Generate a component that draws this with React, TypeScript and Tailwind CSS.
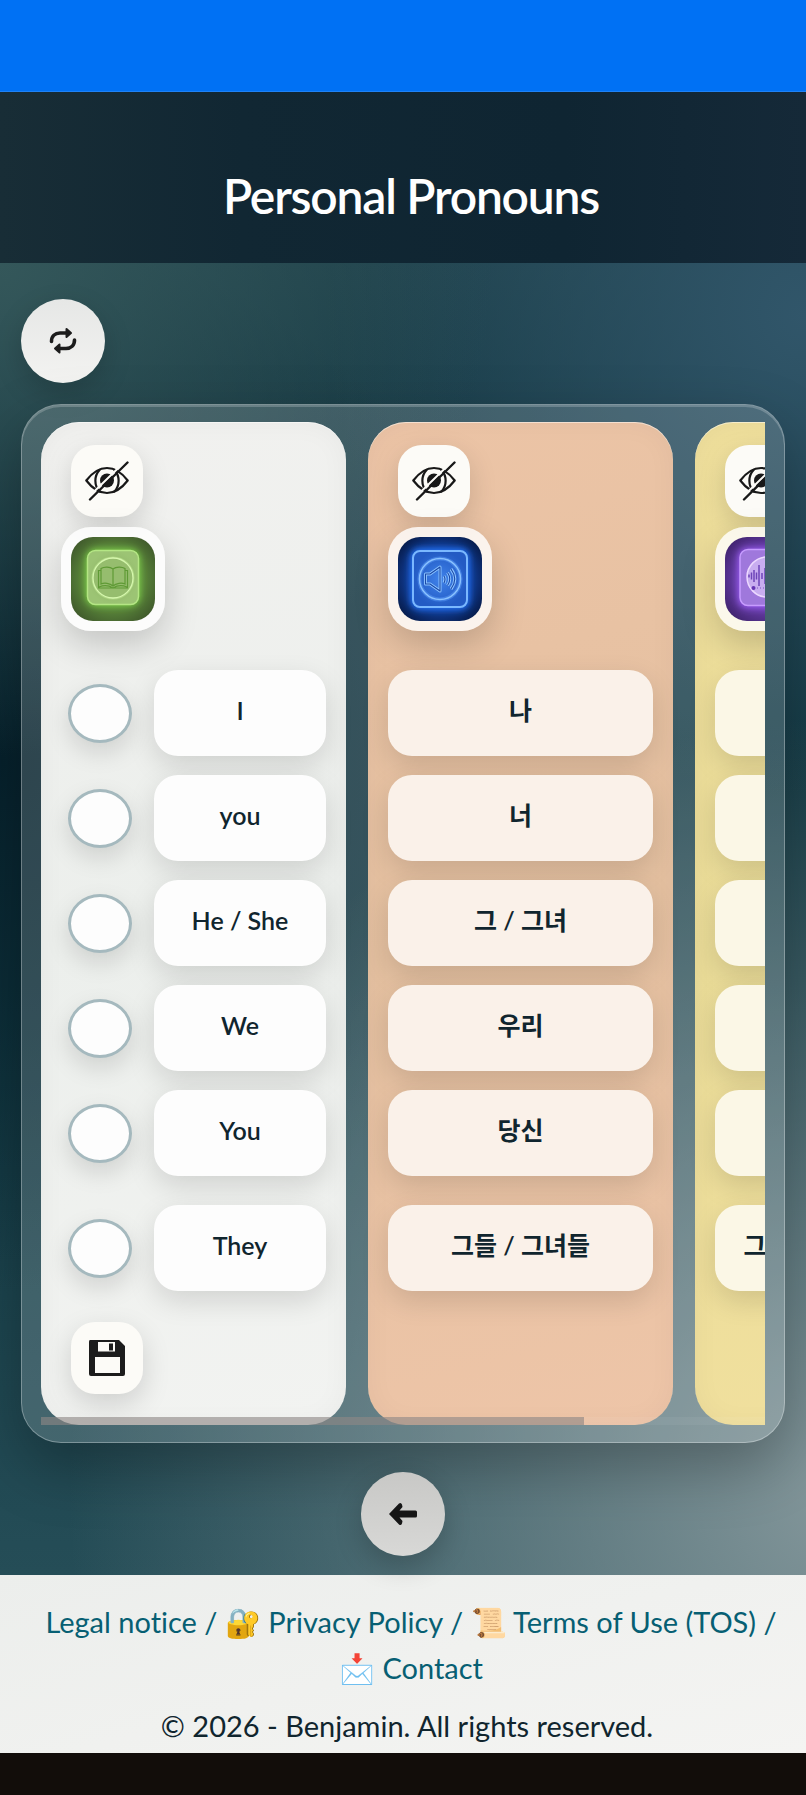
import { type ReactNode } from "react";

interface Pronoun {
  en: string;
  ko: string;
  speech?: string;
}

interface ColumnProps {
  color: string;
  label: string;
  art: ReactNode;
  children: ReactNode;
}

const pronouns: Pronoun[] = [
  { en: "I", ko: "나" },
  { en: "you", ko: "너" },
  { en: "He / She", ko: "그 / 그녀" },
  { en: "We", ko: "우리" },
  { en: "You", ko: "당신" },
  { en: "They", ko: "그들 / 그녀들", speech: "그들은 / 그녀들은요" }
];

const tile =
  "flex h-[86px] items-center justify-center whitespace-nowrap rounded-3xl pb-1 text-[25px] font-semibold text-[#10252e] shadow-[0_10px_28px_rgba(0,0,0,0.13)] last:mt-[10px]";
const square =
  "ml-[10px] flex size-[72px] items-center justify-center rounded-3xl bg-[#fcfbf7] shadow-[0_10px_28px_rgba(0,0,0,0.15)]";

function EyeOff() {
  return (
    <svg viewBox="0 0 44 40" className="h-10 w-11" fill="none" stroke="#181818" strokeWidth="2.2" strokeLinecap="round" strokeLinejoin="round">
      <path d="M1.3 19.500C7 12 14 7 22 7S37 12 42.700 19.500C37 27 30 32 22 32S7 27 1.300 19.500Z" />
      <path d="M14.500 9C9 15 9 24.500 14.500 30.500M29.500 9C35 15 35 24.500 29.500 30.500" />
      <circle cx="22" cy="19.500" r="7" fill="#181818" stroke="none" />
      <path d="M4 35.500 40 0.500" stroke="#fcfbf7" strokeWidth="2" />
      <path d="M5 38.500 42.500 1.500" strokeWidth="2.400" />
    </svg>
  );
}

function BookArt() {
  return (
    <svg viewBox="0 0 84 84" className="size-[84px] rounded-[22px]">
      <defs>
        <radialGradient id="bookBack" r="0.65">
          <stop offset="0.5" stopColor="#5c8a3c" />
          <stop offset="1" stopColor="#3c5329" />
        </radialGradient>
        <radialGradient id="bookFill">
          <stop offset="0" stopColor="#8aae62" />
          <stop offset="1" stopColor="#9cc474" />
        </radialGradient>
        <filter id="bookGlow" x="-30%" y="-30%" width="160%" height="160%">
          <feGaussianBlur stdDeviation="3.500" />
        </filter>
      </defs>
      <rect width="84" height="84" fill="url(#bookBack)" />
      <rect x="15" y="12" width="54" height="57" rx="10" fill="#7ed048" filter="url(#bookGlow)" />
      <rect x="16.500" y="13.500" width="51" height="54" rx="8" fill="url(#bookFill)" stroke="#b4e684" strokeWidth="1.500" />
      <circle cx="42" cy="41" r="20" fill="none" stroke="#c3ee96" strokeWidth="3" opacity="0.5" />
      <circle cx="42" cy="41" r="20" fill="#96bd6e" stroke="#d6f7ae" strokeWidth="1.300" />
      <g fill="none" stroke="#5f9a35" strokeWidth="1.200">
        <path d="M42 49V32C39 29.500 33 29.500 30 31.500V47C33 45.500 39 46 42 49C45 46 51 45.500 54 47V31.500C51 29.500 45 29.500 42 32" />
        <path d="M30 33.500H27.500V51H56.500V33.500H54M28 50C33 48 38 48.500 42 51C46 48.500 51 48 56 50" />
      </g>
    </svg>
  );
}

function SpeakerArt() {
  return (
    <svg viewBox="0 0 84 84" className="size-[84px] rounded-[22px]">
      <defs>
        <radialGradient id="speakerBack" r="0.65">
          <stop offset="0.5" stopColor="#12409e" />
          <stop offset="1" stopColor="#051740" />
        </radialGradient>
        <radialGradient id="speakerFill">
          <stop offset="0" stopColor="#3f82ea" />
          <stop offset="1" stopColor="#235bc4" />
        </radialGradient>
        <filter id="speakerGlow" x="-30%" y="-30%" width="160%" height="160%">
          <feGaussianBlur stdDeviation="3" />
        </filter>
      </defs>
      <rect width="84" height="84" fill="url(#speakerBack)" />
      <rect x="12" y="11" width="60" height="62" rx="10" fill="#2470f2" filter="url(#speakerGlow)" />
      <rect x="15" y="14" width="54" height="56" rx="7" fill="url(#speakerFill)" stroke="#7ab8ff" strokeWidth="2" />
      <circle cx="42" cy="42" r="20.500" fill="none" stroke="#5c9cf8" strokeWidth="4" opacity="0.5" />
      <circle cx="42" cy="42" r="20.500" fill="none" stroke="#8ac2ff" strokeWidth="1.500" />
      <g fill="none" stroke="#8cc4ff" strokeWidth="3" strokeLinejoin="round">
        <path d="M27.500 37H32L42 30V54L32 47H27.500Z" />
        <path d="M46 39Q48 42 46 46M49.500 35.500Q54 42 49.500 48.500M53 32Q60.500 42 53 52" />
      </g>
      <g fill="none" stroke="#1b48a6" strokeWidth="1.100" strokeLinejoin="round">
        <path d="M27.500 37H32L42 30V54L32 47H27.500Z" />
        <path d="M46 39Q48 42 46 46M49.500 35.500Q54 42 49.500 48.500M53 32Q60.500 42 53 52" />
      </g>
    </svg>
  );
}

function WaveArt() {
  return (
    <svg viewBox="0 0 84 84" className="size-[84px] rounded-[22px]">
      <defs>
        <radialGradient id="waveBack" r="0.65">
          <stop offset="0.5" stopColor="#6a3fae" />
          <stop offset="1" stopColor="#3b2066" />
        </radialGradient>
        <filter id="waveGlow" x="-30%" y="-30%" width="160%" height="160%">
          <feGaussianBlur stdDeviation="3.500" />
        </filter>
      </defs>
      <rect width="84" height="84" fill="url(#waveBack)" />
      <rect x="13" y="11" width="58" height="60" rx="9" fill="#9a5cf0" filter="url(#waveGlow)" />
      <rect x="15" y="12.500" width="54" height="56" rx="8" fill="#9f78dc" stroke="#c79cff" strokeWidth="1.500" />
      <circle cx="42" cy="40" r="20" fill="#c8adf0" stroke="#ecd8ff" strokeWidth="1.500" />
      <path d="M24 37.500V40.500M26.500 35.500V42.500M29 33V45M31.500 35.500V42.500M34 28V49M37 36V42M40 31V47M43 34V44M46 29V49M49 36V42" stroke="#6d45b8" strokeWidth="1.500" />
      <path d="M32 51H56" stroke="#7c55c4" strokeDasharray="1 2" />
      <circle cx="28.500" cy="51" r="2" fill="#6435b4" />
    </svg>
  );
}

function Column({ color, label, art, children }: ColumnProps) {
  return (
    <section
      aria-label={label}
      className={`flex w-[305px] shrink-0 flex-col rounded-[38px] px-5 pt-[23px] pb-[31px] shadow-[inset_0_1px_0_rgba(255,255,255,0.5),inset_0_0_28px_rgba(0,0,0,0.04)] ${color}`}
    >
      <button type="button" aria-label={`Hide ${label}`} className={square}>
        <EyeOff />
      </button>
      <button
        type="button"
        aria-label={label}
        className="mt-[10px] flex size-[104px] items-center justify-center rounded-[30px] bg-white/80 shadow-[0_14px_34px_rgba(0,0,0,0.18)]"
      >
        {art}
      </button>
      {children}
    </section>
  );
}

export default function App() {
  return (
    <div className="min-h-screen bg-[#120d0a] font-['Lato','Noto_Sans_CJK_KR',sans-serif] text-[#10252e] [font-variant-ligatures:none]">
      <div className="h-[92px] border-b border-[#1f82f5] bg-[#0071f4]" />

      <header className="flex h-[171px] items-center justify-center bg-[linear-gradient(90deg,#182d36_0%,#112733_30%,#0f2532_70%,#152938_100%)] pt-9 pl-4">
        <h1 className="text-[48px] leading-[60px] font-semibold tracking-tight text-white">Personal Pronouns</h1>
      </header>

      <main className="bg-[radial-gradient(circle_at_0%_0%,#34575a_0%,transparent_32%),radial-gradient(circle_at_100%_4%,#31566a_0%,transparent_32%),radial-gradient(circle_at_105%_94%,#84979b_0%,transparent_52%),radial-gradient(ellipse_at_0%_38%,#06212c_0%,transparent_46%),linear-gradient(180deg,#1e414b_0%,#163a45_12%,#123a44_55%,#254d57_100%)] px-[21px] pt-9 pb-[19px]">
        <button
          type="button"
          aria-label="Shuffle"
          className="flex size-[84px] items-center justify-center rounded-full bg-[linear-gradient(#e6e7e6,#f3f3f1)] shadow-[0_10px_28px_rgba(0,0,0,0.18)]"
        >
          <svg viewBox="0 0 28 28" className="size-7" fill="none" stroke="#1c1c1c" strokeWidth="3.600" strokeLinecap="round" strokeLinejoin="round">
            <path d="M2.500 14.500C2.500 9 6 6 11 6H17" />
            <path d="M25.500 13C25.500 18.500 22 21.500 17 21.500H11" />
            <path d="M17.500 2 22 6 17.500 10ZM10.500 17.500 6 21.500 10.500 25.500Z" fill="#1c1c1c" strokeWidth="2" />
          </svg>
        </button>

        <div className="mt-[21px] rounded-[40px] border border-white/30 bg-white/16 px-[19px] py-[17px] shadow-[inset_0_2px_0_rgba(255,255,255,0.2),0_24px_60px_rgba(0,0,0,0.28)]">
          <div className="flex gap-[22px] overflow-hidden">
            <Column label="English" color="bg-[linear-gradient(170deg,#f1f1ef,#ecefec_50%,#f2f3f1)]" art={<BookArt />}>
              <div className="mt-[39px] flex flex-col gap-[19px]">
                {pronouns.map((item, index) => (
                  <div key={item.en} className="flex items-center gap-[22px] pl-[7px] last:mt-[10px]">
                    <input
                      id={`pronoun-${index}`}
                      type="checkbox"
                      className="h-[59px] w-16 shrink-0 appearance-none rounded-[50%] border-3 border-[#a5b9be] bg-[#fdfdfd] shadow-[0_10px_24px_rgba(0,0,0,0.13)]"
                    />
                    <label htmlFor={`pronoun-${index}`} className={`${tile} mt-0! flex-1 bg-[#fdfdfd]`}>
                      {item.en}
                    </label>
                  </div>
                ))}
              </div>
              <button type="button" aria-label="Save" className={`${square} mt-[31px]`}>
                <svg viewBox="0 0 38 38" className="size-[38px]">
                  <path fillRule="evenodd" fill="#1c1c1c" d="M2 1H31L37 7V35Q37 37 35 37H3Q1 37 1 35V3Q1 1 2 1ZM10 3V12.500H27V3ZM7 18V34H32V18Z" />
                  <path fill="#1c1c1c" d="M21 4.500H25V11.500H21Z" />
                </svg>
              </button>
            </Column>

            <Column label="Listening" color="bg-[linear-gradient(165deg,#ecc4a6,#e4c0a0_50%,#eec5a8)]" art={<SpeakerArt />}>
              <div className="mt-[39px] flex flex-col gap-[19px]">
                {pronouns.map((item) => (
                  <button key={item.ko} type="button" className={`${tile} bg-[#faf1e9]`}>
                    {item.ko}
                  </button>
                ))}
              </div>
            </Column>

            <Column label="Speaking" color="bg-[linear-gradient(165deg,#efdf9c,#eadc98_50%,#f1e09e)]" art={<WaveArt />}>
              <div className="mt-[39px] flex flex-col gap-[19px]">
                {pronouns.map((item) => (
                  <button key={item.ko} type="button" aria-label={item.ko} className={`${tile} bg-[#fbf7e6]`}>
                    {item.speech}
                  </button>
                ))}
              </div>
            </Column>
          </div>
          <div className="relative">
            <div className="absolute inset-x-0 bottom-0 h-2 bg-white/5">
              <div className="h-full w-3/4 bg-[#8a8482]/60" />
            </div>
          </div>
        </div>

        <div className="mt-[29px] flex justify-center">
          <button
            type="button"
            aria-label="Back"
            className="flex size-[84px] items-center justify-center rounded-full bg-[linear-gradient(#c8c8c6,#d8d8d6)] shadow-[0_10px_28px_rgba(0,0,0,0.2)]"
          >
            <svg viewBox="0 0 30 24" className="h-6 w-[30px]" fill="#161616">
              <path d="M1 12 11 1.500Q13 0 14 2.500L14.500 5 11.500 8.500H27.500Q29 8.500 29 10V14Q29 15.500 27.500 15.500H11.500L14.500 19 14 21.500Q13 24 11 22.500Z" />
            </svg>
          </button>
        </div>
      </main>

      <footer className="bg-[linear-gradient(165deg,#eceeec,#f4f4f2)] px-6 pt-6 pb-1 text-center text-[29px] leading-[46px]">
        <nav className="pl-4 text-[#075f73]">
          <a href="#legal">Legal notice /</a> <a href="#privacy">🔐 Privacy Policy /</a>{" "}
          <a href="#terms">📜 Terms of Use (TOS) /</a>
          <br />
          <a href="#contact">📩 Contact</a>
        </nav>
        <p className="mt-3 pl-2">© 2026 - Benjamin. All rights reserved.</p>
      </footer>
    </div>
  );
}
